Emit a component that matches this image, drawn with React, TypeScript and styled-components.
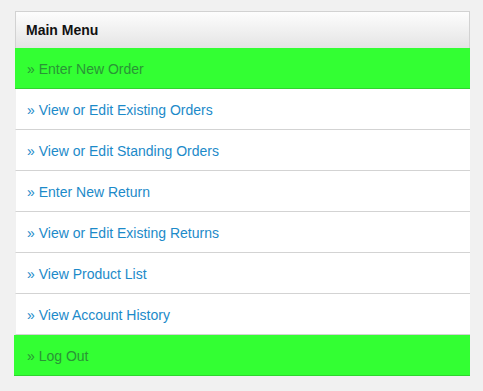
import React from "react";
import styled, { createGlobalStyle } from "styled-components";

const GlobalStyle = createGlobalStyle`
	body {
		margin: 0;
		background: #f1f1f1;
		font-family: "Liberation Sans", Arial, sans-serif;
	}
`;

const Page = styled.div`
	padding: 11px 13px 0 15px;
`;

const Panel = styled.div`
	display: flex;
	flex-direction: column;
`;

const Header = styled.div`
	height: 36px;
	display: flex;
	align-items: center;
	padding-left: 10px;
	border: 1px solid #d2d2d2;
	border-bottom: none;
	background: linear-gradient(to bottom, #fdfdfd, #e4e4e4);
	font-size: 14px;
	font-weight: bold;
	color: #111;
`;

const Item = styled.a<{ $active?: boolean; $shift?: boolean }>`
	display: flex;
	align-items: center;
	box-sizing: border-box;
	height: 41px;
	padding-top: 2px;
	padding-left: ${(p) => (p.$shift ? "13px" : p.$active ? "12px" : "11px")};
	margin-left: ${(p) => (p.$shift ? "-1px" : "0")};
	border-left: ${(p) => (p.$active ? "none" : "1px solid #f1f1f1")};
	border-bottom: 1px solid ${(p) => (p.$active ? "#2fd42f" : "#d3d3d3")};
	box-shadow: 0 1px 0 #e8e8e8;
	background: ${(p) => (p.$active ? "#33ff33" : "#ffffff")};
	color: ${(p) => (p.$active ? "#2a9436" : "#1c8ac9")};
	font-size: 14px;
	text-decoration: none;
	cursor: pointer;
`;

const items = [
	{ label: "Enter New Order", active: true },
	{ label: "View or Edit Existing Orders" },
	{ label: "View or Edit Standing Orders" },
	{ label: "Enter New Return" },
	{ label: "View or Edit Existing Returns" },
	{ label: "View Product List" },
	{ label: "View Account History" },
	{ label: "Log Out", active: true, shift: true },
];

export default function App() {
	return (
		<Page>
			<GlobalStyle />
			<Panel>
				<Header>Main Menu</Header>
				{items.map((item) => (
					<Item key={item.label} $active={item.active} $shift={item.shift}>
						» {item.label}
					</Item>
				))}
			</Panel>
		</Page>
	);
}
